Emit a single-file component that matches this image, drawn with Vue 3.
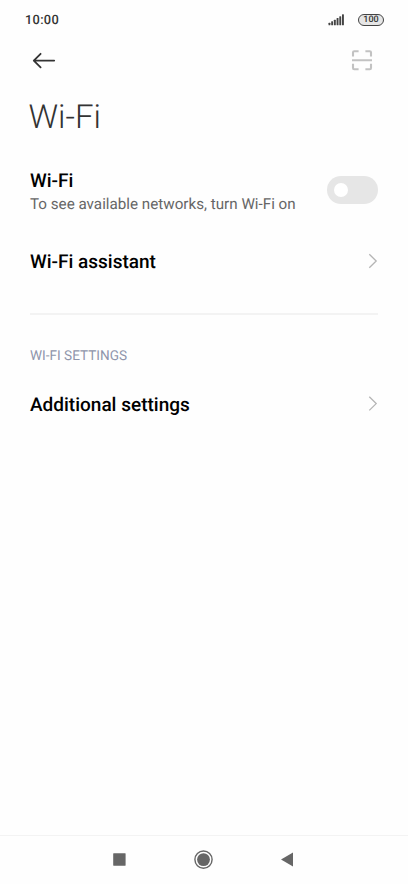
<script setup>
import { ref } from 'vue'

const wifiOn = ref(false)
const bars = [2.5, 4, 5.5, 7.2, 9, 11]
</script>

<template>
  <div class="screen">
    <header class="status">
      <span class="clock">10:00</span>
      <svg class="signal" width="17" height="12" viewBox="0 0 17 12">
        <rect v-for="(h, i) in bars" :key="i" :x="0.5 + i * 2.7" :y="11.2 - h" width="1.9" :height="h" rx="0.5" fill="#444" />
      </svg>
      <span class="battery">100</span>
    </header>

    <div class="toolbar">
      <svg width="24" height="18" viewBox="0 0 24 18" fill="none" stroke="#333" stroke-width="1.8" stroke-linecap="round" stroke-linejoin="round">
        <path d="M22.2 8.6H2M8.6 1.8L1.8 8.6l6.8 6.8" />
      </svg>
      <svg width="22" height="22" viewBox="0 0 22 22" fill="none" stroke="#c2c2c2" stroke-width="2.1" stroke-linejoin="round">
        <path d="M2 6.6V2.4Q2 1.2 3.2 1.2H7.6M14.4 1.2H18.8Q20 1.2 20 2.4V6.6M2 13.8V18Q2 19.2 3.2 19.2H7.6M14.4 19.2H18.8Q20 19.2 20 18V13.8M1 10.2H21" />
      </svg>
    </div>

    <h1 class="title">Wi-Fi</h1>

    <main>
      <div class="row wifi" @click="wifiOn = !wifiOn">
        <div class="text">
          <div class="label">Wi-Fi</div>
          <div class="hint">To see available networks, turn Wi-Fi on</div>
        </div>
        <span class="switch" :class="{ on: wifiOn }"><i></i></span>
      </div>
      <div class="row">
        <span class="label">Wi-Fi assistant</span>
        <svg class="chevron" width="10" height="16" viewBox="0 0 10 16"><path d="M1.3 1.2L8.2 8l-6.9 6.8" /></svg>
      </div>
      <hr />
      <h2 class="section">WI-FI SETTINGS</h2>
      <div class="row extra">
        <span class="label">Additional settings</span>
        <svg class="chevron" width="10" height="16" viewBox="0 0 10 16"><path d="M1.3 .8L8.2 7.6l-6.9 6.8" /></svg>
      </div>
    </main>

    <nav class="nav">
      <svg width="20" height="20" viewBox="0 0 20 20"><rect x="4.2" y="3.3" width="12.4" height="12.4" rx="0.4" fill="#666" /></svg>
      <svg width="20" height="20" viewBox="0 0 20 20">
        <circle cx="10.5" cy="9.6" r="8.6" fill="none" stroke="#666" stroke-width="1.4" />
        <circle cx="10.5" cy="9.6" r="6.4" fill="#666" />
      </svg>
      <svg width="20" height="20" viewBox="0 0 20 20"><path d="M4 9.6L16 2.6v14z" fill="#666" /></svg>
    </nav>
  </div>
</template>

<style>
body { background: #fefefe; }
</style>

<style scoped>
.screen {
  box-sizing: border-box;
  width: 408px;
  height: 884px;
  display: flex;
  flex-direction: column;
  overflow: hidden;
  background: #fefefe;
  color: #000;
  font-family: Roboto, "Liberation Sans", sans-serif;
  text-rendering: geometricPrecision;
}
.status {
  height: 40px;
  box-sizing: border-box;
  padding: 0 24px 1px 25px;
  display: flex;
  align-items: center;
}
.clock {
  flex: 1;
  padding-top: 2px;
  font-size: 12.8px;
  font-weight: 500;
  letter-spacing: 0.3px;
  color: #333;
}
.signal { margin-right: 13px; }
.battery {
  box-sizing: border-box;
  width: 26px;
  height: 12px;
  border: 1.3px solid #444;
  border-radius: 6px;
  background: #e6e6e6;
  color: #333;
  font-size: 9px;
  line-height: 11px;
  font-weight: 500;
  text-align: center;
}
.toolbar {
  height: 41px;
  padding: 0 35px 0 32px;
  display: flex;
  align-items: center;
  justify-content: space-between;
}
.title {
  margin: 17px 0 0 28.5px;
  font-size: 33px;
  line-height: 40px;
  font-weight: 300;
  color: #333;
}
main { flex: 1; padding: 22px 30px 0; }
.row {
  height: 54px;
  display: flex;
  align-items: center;
  justify-content: space-between;
}
.wifi { height: 60px; margin-bottom: 14px; }
.wifi .label { line-height: 24px; }
.wifi .text { padding-top: 4px; }
.label { font-size: 19px; font-weight: 500; }
.hint {
  font-size: 15.2px;
  line-height: 22px;
  color: #666;
  white-space: nowrap;
}
.switch {
  box-sizing: border-box;
  width: 51px;
  height: 28px;
  padding: 7px;
  border-radius: 14px;
  background: #e6e6e6;
}
.switch i {
  display: block;
  width: 14px;
  height: 14px;
  border-radius: 50%;
  background: #fff;
}
.switch.on { background: #3482ff; }
.switch.on i { margin-left: 23px; }
.chevron {
  fill: none;
  stroke: #b5b5b5;
  stroke-width: 1.3;
}
hr {
  height: 2px;
  margin: 25px 0 31px;
  border: 0;
  background: #f3f3f3;
}
.section {
  margin: 0;
  font-size: 13.6px;
  line-height: 20px;
  font-weight: 400;
  color: #8f95ab;
}
.extra { margin-top: 11px; }
.nav {
  height: 48px;
  border-top: 1px solid #f3f3f3;
  padding: 0 111px 0 109px;
  display: flex;
  align-items: center;
  justify-content: space-between;
}
</style>
